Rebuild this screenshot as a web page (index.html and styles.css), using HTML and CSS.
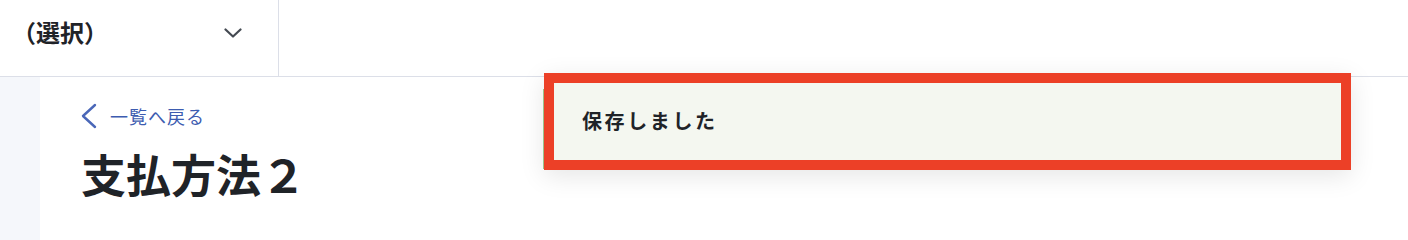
FILE: index.html
```html
<!DOCTYPE html>
<html lang="ja">
<head>
<meta charset="utf-8">
<title>支払方法２</title>
<link rel="stylesheet" href="styles.css">
</head>
<body>
<header class="topbar">
  <div class="select">
    <span class="select-label">（選択）</span>
    <svg class="chev-down" width="18" height="12" viewBox="0 0 18 12"><path d="M1.5 2.5 L9 9.5 L16.5 2.5" fill="none" stroke="#444a52" stroke-width="2.2" stroke-linecap="round" stroke-linejoin="round"/></svg>
  </div>
  <div class="topbar-rest"></div>
</header>
<div class="body">
  <aside class="side"></aside>
  <main class="main">
    <a class="back" href="#">
      <svg class="chev-left" width="18" height="26" viewBox="0 0 18 26"><path d="M15 2 L3 13 L15 24" fill="none" stroke="#4a67b8" stroke-width="2.4" stroke-linecap="round" stroke-linejoin="round"/></svg>
      <span>一覧へ戻る</span>
    </a>
    <h1 class="title">支払方法２</h1>
  </main>
</div>
<div class="toast">
  <span class="toast-text">保存しました</span>
</div>
</body>
</html>
```

FILE: styles.css
```css
html, body {
  margin: 0;
  padding: 0;
  background: #ffffff;
  font-family: "Noto Sans CJK JP", "Noto Sans", sans-serif;
  color: #1f2328;
}
.topbar {
  display: flex;
  height: 76px;
  border-bottom: 1px solid #dcdfe8;
}
.select {
  width: 279px;
  box-sizing: border-box;
  border-right: 1px solid #dcdfe8;
  display: flex;
  align-items: center;
  padding: 0 36px 0 12px;
  justify-content: space-between;
}
.select-label {
  font-size: 24px;
  font-weight: 700;
  margin-top: -14px;
}
.chev-down {
  margin-top: -10px;
}
.topbar-rest {
  flex: 1;
}
.body {
  display: flex;
  height: 163px;
}
.side {
  width: 40px;
  background: #f5f7fb;
}
.main {
  flex: 1;
  padding: 26px 0 0 40px;
}
.back {
  display: flex;
  align-items: center;
  gap: 12px;
  color: #3d5cb0;
  text-decoration: none;
  font-size: 18px;
  letter-spacing: 1px;
  height: 26px;
}
.title {
  margin: 16px 0 0 1px;
  font-size: 45px;
  font-weight: 700;
  line-height: 58px;
  color: #1f2328;
}
.toast {
  position: absolute;
  left: 544px;
  top: 73px;
  width: 807px;
  height: 97px;
  box-sizing: border-box;
  border: 10px solid #ec4027;
  background: #f4f7f0;
  box-shadow: 0 6px 24px rgba(0, 0, 0, 0.10);
  display: flex;
  align-items: center;
  padding-left: 28px;
}
.toast::before {
  content: "";
  position: absolute;
  left: -11px;
  top: 6px;
  width: 1px;
  height: 80px;
  background: #9cc28a;
}
.toast-text {
  font-size: 20px;
  font-weight: 700;
  letter-spacing: 2.6px;
  color: #1f2328;
  margin-top: -2px;
}
```
